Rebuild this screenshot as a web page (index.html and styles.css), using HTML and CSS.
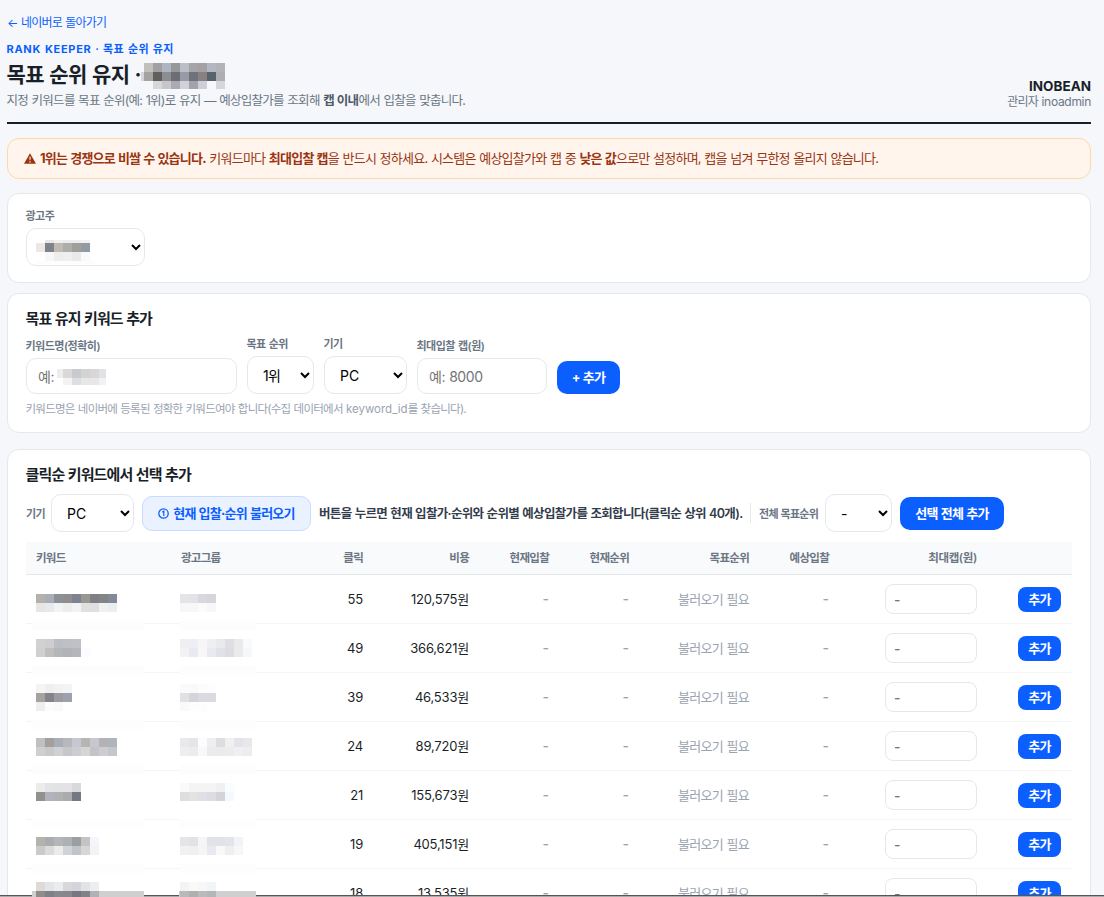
FILE: index.html
```html
<!DOCTYPE html>
<html lang="ko">
<head>
<meta charset="utf-8">
<title>목표 순위 유지</title>
<link rel="stylesheet" href="styles.css">
</head>
<body>
<a class="back" href="#"><span class="arrow">←</span> 네이버로 돌아가기</a>
<header class="head">
  <div>
    <div class="eyebrow"><span class="latin">RANK KEEPER</span> · 목표 순위 유지</div>
    <h1 class="title">목표 순위 유지 ·</h1>
    <p class="sub">지정 키워드를 목표 순위(예: 1위)로 유지 — 예상입찰가를 조회해 <b>캡 이내</b>에서 입찰을 맞춥니다.</p>
  </div>
  <div class="account"><div class="org">INOBEAN</div><div class="who">관리자 <span class="latin">inoadmin</span></div></div>
</header>
<div class="warning">
  <svg class="warn-icon" width="12" height="11" viewBox="0 0 12 11"><path d="M6 0.2 12 10.8H0Z" fill="#9a3412"/><path d="M5.3 3.7h1.4L6.4 7.3h-.8ZM5.35 8.2h1.3v1.3h-1.3Z" fill="#fff5ec"/></svg>
  <span><b>1위는 경쟁으로 비쌀 수 있습니다.</b> 키워드마다 <b>최대입찰 캡</b>을 반드시 정하세요. 시스템은 예상입찰가와 캡 중 <b>낮은 값</b>으로만 설정하며, 캡을 넘겨 무한정 올리지 않습니다.</span>
</div>
<section class="card advertiser">
  <label class="field"><span class="label">광고주</span><select class="select wide"><option></option></select></label>
</section>
<section class="card add">
  <h2 class="heading">목표 유지 키워드 추가</h2>
  <div class="form">
    <label class="field"><span class="label">키워드명(정확히)</span><input class="input name" placeholder="예:"></label>
    <label class="field"><span class="label">목표 순위</span><select class="select rank"><option>1위</option></select></label>
    <label class="field"><span class="label">기기</span><select class="select device"><option>PC</option></select></label>
    <label class="field"><span class="label">최대입찰 캡(원)</span><input class="input cap" placeholder="예: 8000"></label>
    <button class="btn plus">+ 추가</button>
  </div>
  <p class="hint">키워드명은 네이버에 등록된 정확한 키워드여야 합니다(수집 데이터에서 <span class="latin">keyword_id</span>를 찾습니다).</p>
</section>
<section class="card pick">
  <h2 class="heading">클릭순 키워드에서 선택 추가</h2>
  <div class="toolbar">
    <span class="label dev">기기</span>
    <select class="select device"><option>PC</option></select>
    <button class="btn load"><svg width="11" height="11" viewBox="0 0 11 11" fill="none" stroke="#0b5fff"><circle cx="5.5" cy="5.5" r="4.7" stroke-width="1.3"/><path d="M4.2 4.2 5.8 3.2V8" stroke-width="1.2"/></svg><span>현재 입찰·순위 불러오기</span></button>
    <span class="guide">버튼을 누르면 현재 입찰가·순위와 순위별 예상입찰가를 조회합니다(클릭순 상위 40개).</span>
    <span class="divider"></span>
    <span class="label all">전체 목표순위</span>
    <select class="select rank"><option>-</option></select>
    <button class="btn all-add">선택 전체 추가</button>
  </div>
  <table class="table">
    <colgroup><col class="c-key"><col class="c-group"><col class="c-click"><col class="c-cost"><col class="c-n"><col class="c-n"><col class="c-target"><col class="c-n"><col class="c-cap"><col></colgroup>
    <thead><tr><th class="left">키워드</th><th class="left">광고그룹</th><th>클릭</th><th>비용</th><th>현재입찰</th><th>현재순위</th><th>목표순위</th><th>예상입찰</th><th class="cap-head">최대캡(원)</th><th></th></tr></thead>
    <tbody id="rows"></tbody>
  </table>
</section>
<div class="edge"></div>
<svg class="mask" id="mask" width="1104" height="897" shape-rendering="crispEdges"></svg>
<script src="app.js"></script>
</body>
</html>
```
FILE: styles.css
```css
* { box-sizing: border-box; }
html { overflow: hidden; }
body {
  margin: 0; padding: 14px 13px 0 7px; height: 897px; overflow: hidden; position: relative;
  background: #f5f7fa; color: #191f28;
  font: 13px/18px Inter, "Noto Sans CJK KR", sans-serif; letter-spacing: -0.055em; word-spacing: 0.05em;
}
h1, h2, p { margin: 0; }
input, select, button { font-family: inherit; letter-spacing: inherit; word-spacing: inherit; margin: 0; }
.latin { letter-spacing: 0; }
.back { display: block; height: 18px; line-height: 18px; font-size: 12px; color: #0b5fff; text-decoration: none; letter-spacing: -0.065em; }
.arrow { letter-spacing: 0; margin-right: -0.7px; }
.head { display: flex; justify-content: space-between; align-items: flex-end; height: 92px; padding-bottom: 12px; border-bottom: 2px solid #191f28; }
.eyebrow { font-size: 11px; line-height: 16px; font-weight: 700; color: #0b5fff; letter-spacing: 0.45px; margin-left: -0.5px; }
.eyebrow .latin { letter-spacing: 0.7px; }
.title { font-size: 21px; line-height: 35px; font-weight: 700; letter-spacing: -0.025em; margin-left: -0.5px; }
.sub { font-size: 12.5px; line-height: 18px; color: #6b7684; margin-left: -0.5px; }
.sub b { color: #4e5968; }
.account { text-align: right; font-size: 12px; line-height: 15px; color: #6b7684; padding-bottom: 1px; }
.account .latin { letter-spacing: -0.3px; }
.org { font-size: 13.5px; font-weight: 700; color: #191f28; letter-spacing: 0; }
.warning { display: flex; align-items: center; gap: 4px; height: 41px; margin-top: 14px; padding: 0 16px 1px; border: 1px solid #ffd8a8; border-radius: 12px; background: #fff5ec; color: #9a3412; font-size: 13px; letter-spacing: -0.059em; white-space: nowrap; }
.card { background: #fff; border: 1px solid #e5e8eb; border-radius: 12px; padding: 0 18px; }
.advertiser { height: 90px; margin-top: 14px; padding-top: 14px; }
.add { height: 140px; margin-top: 10px; padding-top: 15px; }
.pick { height: 500px; margin-top: 16px; padding-top: 15px; }
.field { display: flex; flex-direction: column; gap: 3px; align-items: flex-start; }
.label { font-size: 11px; line-height: 17px; font-weight: 600; color: #6b7684; white-space: nowrap; }
.field .label { margin-left: -0.5px; letter-spacing: -0.045em; }
.select { height: 38px; padding: 0 11px; border: 1px solid #e5e8eb; border-radius: 10px; background: #fff; color: #000; font-size: 14px; }
.wide { width: 119px; }
.rank { width: 67px; }
.device { width: 83px; letter-spacing: 0; }
.input { height: 36px; padding: 0 11px; border: 1px solid #e5e8eb; border-radius: 10px; font-size: 14px; letter-spacing: -0.45px; background: #fff; }
.input::placeholder { color: #757575; }
.name { width: 211px; }
.cap { width: 130px; }
.heading { font-size: 15px; line-height: 20px; font-weight: 700; letter-spacing: -0.057em; margin-left: -0.5px; }
.form { display: flex; gap: 10px; align-items: flex-end; margin-top: 7px; }
.btn { display: flex; align-items: center; justify-content: center; gap: 4px; border: 0; padding: 0; border-radius: 10px; background: #0b5fff; color: #fff; font-size: 13px; line-height: 18px; font-weight: 700; white-space: nowrap; }
.plus { width: 63px; height: 33px; padding-bottom: 1px; }
.hint { margin-top: 6px; font-size: 11.5px; color: #9aa3af; letter-spacing: -0.065em; margin-left: -0.5px; }
.toolbar { display: flex; align-items: center; margin-top: 9px; height: 38px; }
.dev { width: 25px; padding-top: 2px; }
.load { width: 169px; height: 35px; margin: 0 8px; border: 1px solid #c9dbff; background: #ebf2ff; color: #0b5fff; letter-spacing: -0.058em; }
.guide { width: 431px; padding-top: 1px; font-size: 12.5px; font-weight: 600; letter-spacing: -0.053em; color: #333d4b; white-space: nowrap; }
.divider { width: 1px; height: 20px; background: #e5e8eb; }
.all { width: 66px; margin-left: 8px; padding-top: 2px; }
.all-add { width: 104px; height: 33px; margin-left: 8px; letter-spacing: -0.055em; }
.table { width: 1046px; margin-top: 10px; table-layout: fixed; border-collapse: separate; border-spacing: 0; }
.c-key { width: 145px; } .c-group { width: 139px; } .c-click { width: 63px; } .c-cost { width: 106px; }
.c-n { width: 80px; } .c-target { width: 120px; } .c-cap { width: 148px; }
.table th { height: 33px; padding: 0 10px; background: #f9fafb; border-bottom: 1px solid #e5e8eb; font-size: 11.5px; font-weight: 600; line-height: 16px; color: #6b7684; text-align: right; }
.table .left { text-align: left; }
.table .cap-head { letter-spacing: -0.03em; }
.table td { height: 49px; padding: 0 10px; border-bottom: 1px solid #f2f4f6; text-align: right; white-space: nowrap; }
.table .num { letter-spacing: -0.2px; padding-right: 10px; }
.table .muted { color: #9aa3af; }
.table .dash { letter-spacing: 0; font-size: 14px; font-weight: 500; }
.small { display: block; width: 92px; height: 30px; margin-left: auto; padding: 0 8px; border: 1px solid #e5e8eb; border-radius: 8px; font-size: 14px; letter-spacing: 0; }
.small::placeholder { color: #757575; font-weight: 500; }
.table td:last-child { padding-right: 11px; }
.row-add { width: 43px; height: 25px; margin-left: auto; border-radius: 8px; font-size: 13px; line-height: 19px; }
.edge { position: absolute; left: 0; right: 0; top: 895px; height: 2px; background: #aaa; border-top: 1px solid #555; }
.mask { position: absolute; left: 0; top: 0; pointer-events: none; }
```
FILE: app.js
```js
const data = [[55, '120,575'], [49, '366,621'], [39, '46,533'], [24, '89,720'], [21, '155,673'], [19, '405,151'], [18, '13,535']];
document.getElementById('rows').innerHTML = data.map(([clicks, cost]) => `<tr>
  <td></td><td></td><td class="num">${clicks}</td><td class="num">${cost}원</td>
  <td class="muted dash">-</td><td class="muted dash">-</td><td class="muted">불러오기 필요</td><td class="muted dash">-</td>
  <td><input class="small" placeholder="-"></td><td><button class="btn row-add">추가</button></td></tr>`).join('');

// Pixelated blocks that hide private names: [x, y, cell height, colours], cells are 9px wide.
const strips = [
  [144, 63, 9, 'c2bfbd a0a0a2 adb5c0 969999 bcbdc9 a5a4a7 a3a1a3 b3b7c1 b2b2b7'],
  [144, 72, 9, 'a5a3a2 605f5e 8c8d91 6c6e74 989aa5 6f717b 878181 58616e adadb2'],
  [153, 81, 8, 'd9d8d9 c6c6cb a9abb1 d1d1db a2a2a9 cdced9 f7f8fb d5d6da'],
  [45, 240, 3, 'e7e7e7 efefef ececec ececec f1f1f1'],
  [36, 243, 9, 'ece7e4 7e8387 bfbbb4 adadac a09f9b 929ba1'],
  [45, 252, 9, 'f7f7f7 eeedec efefef e9eaec fafafa'],
  [63, 369, 9, 'd9d9da c9cacd d2d3d3 d8d6d8 e1e2e4'],
  [63, 378, 7, 'f4f2f2 dcdee2 e8e7e7 e8e8e8 f1f2f3'],
  [36, 594, 9, 'b4b0aa a9adb7 8d9194 8f8d90 7e838f 989793 807f88 838485 818b97'],
  [36, 603, 9, 'e8e6e4 e7e9eb f1f3f5 ebeeed f3f3f3 e0e0e0 dfdfdf f0f1f3 eaeeed'],
  [180, 594, 9, 'e4e4e6 e2e2e7 d8d8de d5d6dc'],
  [180, 603, 9, 'f7f7f7 f7f7f7 fbfbfb f7f7f7'],
  [36, 639, 9, 'd1d1d2 cecece bcbec3 bfc0c3 c0c1c6'],
  [36, 648, 9, 'd0d0d0 c0bebf b5b6b8 b0b4b7 b4b6ba fafcff'],
  [180, 639, 9, 'efefef eeeff4 f6f6f6 eeeff1 e9eaee e0dee4 e9ebeb f9fafc'],
  [180, 648, 9, 'f2f2f2 e9e9f0 f8f6f7 e9e9ef e1e2e8 dddce3 eaebed f7f7f9'],
  [36, 684, 9, 'f4f4f4 efefef f2f2f2 f2f4f6'],
  [36, 693, 9, 'a6a29f 84838c 9a9ca1 9da2ac'],
  [36, 702, 9, 'eeeeee fcfcff f9f9f9'],
  [180, 684, 9, 'fafafa f9f9f9 fcfcfc fdfdfd'],
  [180, 693, 9, 'e1e1e4 d4d4d9 dadae0 dadae0'],
  [180, 702, 9, 'f9f9f9 fdfdfd fdfdfd'],
  [36, 738, 9, 'bfc0c2 a39f9d a9afb6 b7b8bc c7c7cf b5b5b2 c7c7cf b4b2b4 adb5bf'],
  [36, 747, 9, 'cfcfd1 cac9ca d0d1d2 c6c7ca cdcdd1 d5d5d5 c5c3c7 caced3 c5c6ca'],
  [180, 738, 9, 'e9e9eb e4e5e9 fcfcfc eeeef1 dcdce3 f0f0f0 e3e3e9 e7e7ec'],
  [180, 747, 9, 'eeeeef ececec f8f8f8 ebebed ebebeb ececec f0f0f3 ededef'],
  [36, 783, 9, 'ececeb e3e4e6 e3e3e4 e3e3e5 d7d9dc'],
  [36, 792, 9, '92918f b0b3bd b0b1b3 a9abad 747981'],
  [180, 783, 9, 'fafafa f4f4f4 f4f4f4 f4f4f4 f0f0f0 fafdff'],
  [180, 792, 9, 'dedee0 e3e3e4 dfe0e6 dcdde4 d5d3d7 f4f9ff'],
  [36, 837, 9, 'b4b2ac aaacb0 b4b5b9 aeb0b5 999fa2 c4c4c5 f4f6fb'],
  [36, 846, 9, 'cacac9 dbdbdb ebebeb d0d3d9 c2c4c7 d6d6d6 f2f3f6'],
  [180, 837, 9, 'e5e5e8 e1e2e6 f6f4f5 e1e3e8 e1e3e8 e3e4e9 f2f3f5'],
  [180, 846, 9, 'f1f1f1 f0f0f0 f6f5f5 e9eaf0 f9f9f9 efeff0 f7f7f9'],
  [36, 882, 9, 'dedad7 e3e5e8 ebecef d8d8d9 d3d4dc e2e3e7 eeeeee'],
  [180, 882, 9, 'f4f4f6 f9f9f6 f7f7f9 f3f4f6'],
  [36, 891, 6, '918b89 7c818a 88888d 87868d 78767f 818286 b1b0b7'],
  [180, 891, 6, 'b8b9bb aeb0b2 b9babb b3b6b6']
];
const rect = (x, y, w, h, c) => `<rect x="${x}" y="${y}" width="${w}" height="${h}" fill="#${c}"/>`;
let out = rect(141, 72, 3, 9, 'd6d7da') + rect(57, 369, 6, 9, 'ededed') + rect(99, 369, 7, 9, 'e1e2e4') + rect(99, 378, 7, 7, 'f1f2f3');
out += rect(36, 261, 62, 3, 'fdfdfd');
[621, 666, 720, 765, 819, 864].forEach(y => { out += rect(32, y, 112, 9, 'fdfdfd') + rect(179, y, 77, 9, 'fdfdfd'); });
out += rect(32, 891, 112, 6, 'cfcfcf') + rect(179, 891, 77, 6, 'cfcfcf');
strips.forEach(([x, y, h, cells]) => cells.split(' ').forEach((c, i) => {
  out += rect(x + i * 9, y, x === 63 && i === 4 ? 7 : 9, h, c);
}));
document.getElementById('mask').innerHTML = out;
```
